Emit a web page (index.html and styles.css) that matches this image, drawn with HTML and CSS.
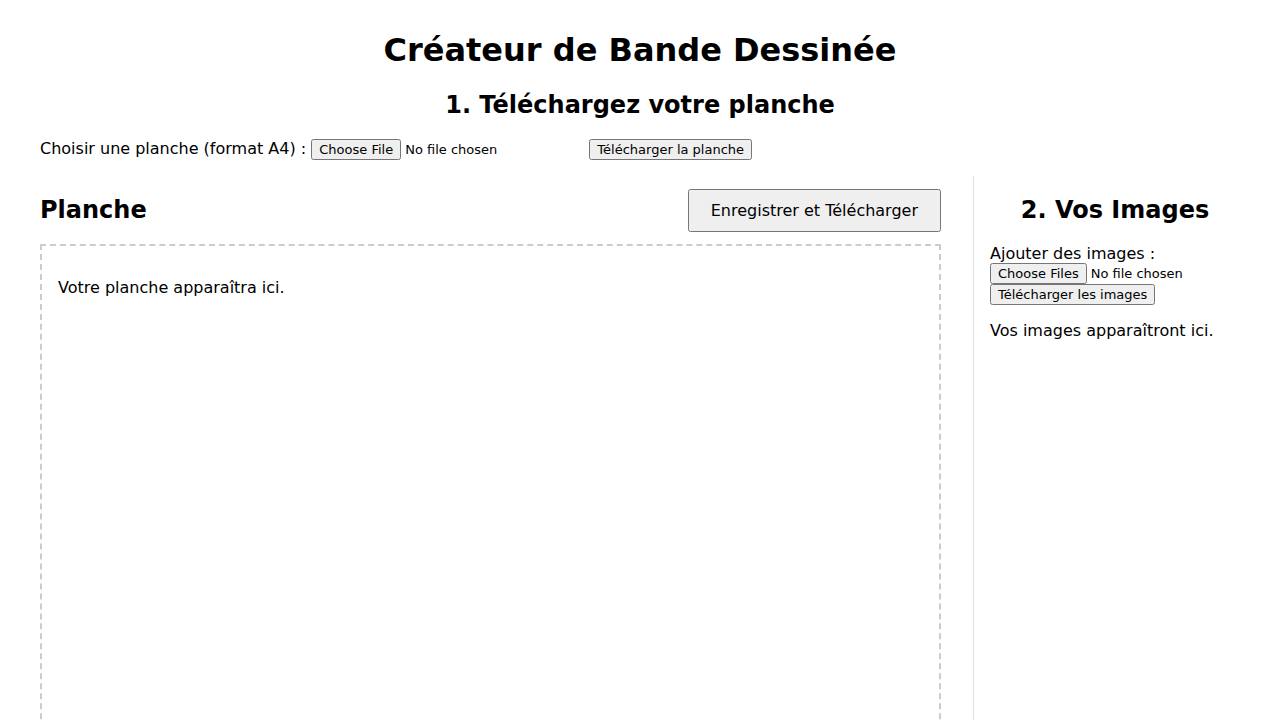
FILE: index.html
```html
<!DOCTYPE html>
<html lang="fr">
<head>
<meta charset="utf-8">
<title>Créateur de Bande Dessinée</title>
<link rel="stylesheet" href="styles.css">
</head>
<body>
<h1 class="title">Créateur de Bande Dessinée</h1>
<section class="upload">
  <h2 class="upload-title">1. Téléchargez votre planche</h2>
  <div class="upload-row">
    <label for="planche">Choisir une planche (format A4) :</label>
    <input type="file" id="planche" class="planche-input" accept="image/*">
    <button type="button">Télécharger la planche</button>
  </div>
</section>
<div class="workspace">
  <main class="board">
    <div class="board-header">
      <h2>Planche</h2>
      <button type="button" class="save-btn">Enregistrer et Télécharger</button>
    </div>
    <div class="board-area">
      <p>Votre planche apparaîtra ici.</p>
    </div>
  </main>
  <aside class="images">
    <h2 class="images-title">2. Vos Images</h2>
    <label for="imgs" class="images-label">Ajouter des images :</label>
    <input type="file" id="imgs" multiple accept="image/*">
    <br>
    <button type="button">Télécharger les images</button>
    <p>Vos images apparaîtront ici.</p>
  </aside>
</div>
</body>
</html>
```
FILE: styles.css
```css
html, body {
  font-family: "DejaVu Sans", sans-serif;
  color: #000;
  background: #fff;
}
body {
  margin: 10px 40px 0;
}
button, input {
  font-family: "DejaVu Sans", sans-serif;
  font-size: 13px;
}
input::file-selector-button {
  font-family: inherit;
  font-size: inherit;
}
.title {
  text-align: center;
  font-size: 32px;
}
.upload-title {
  text-align: center;
  font-size: 24px;
}
.upload-row {
  margin-bottom: 16px;
}
.planche-input {
  width: 273px;
}
.workspace {
  display: flex;
  gap: 32px;
  align-items: stretch;
}
.board {
  flex: 1;
  min-width: 0;
}
.board-header {
  display: flex;
  justify-content: space-between;
  align-items: center;
}
.board-header h2 {
  font-size: 24px;
}
.save-btn {
  font-size: 16px;
  padding: 10px 21px;
  margin-top: 2px;
}
.board-area {
  border: 2px dashed #ccc;
  padding: 0 16px;
  min-height: 1200px;
}
.board-area p {
  margin: 32px 0 16px;
}
.images {
  width: 250px;
  flex: none;
  border-left: 1px solid #ddd;
  padding-left: 16px;
}
.images-title {
  text-align: center;
  font-size: 24px;
}
.images-label {
  display: block;
}
```
